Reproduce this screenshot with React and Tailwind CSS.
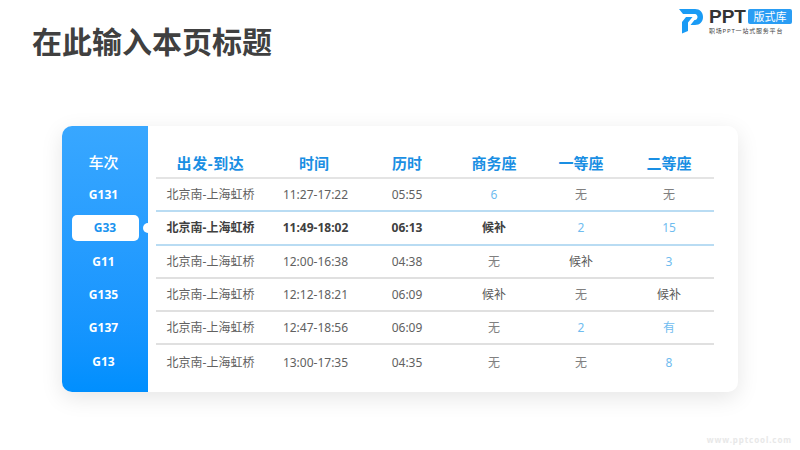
const font = { fontFamily: '"Noto Sans", "Noto Sans CJK SC", sans-serif' };

const rows = [
  { train: "G131", time: "11:27-17:22", span: "05:55", biz: "6", first: "无", second: "无" },
  { train: "G33", time: "11:49-18:02", span: "06:13", biz: "候补", first: "2", second: "15", active: true },
  { train: "G11", time: "12:00-16:38", span: "04:38", biz: "无", first: "候补", second: "3" },
  { train: "G135", time: "12:12-18:21", span: "06:09", biz: "候补", first: "无", second: "候补" },
  { train: "G137", time: "12:47-18:56", span: "06:09", biz: "无", first: "2", second: "有" },
  { train: "G13", time: "13:00-17:35", span: "04:35", biz: "无", first: "无", second: "8" },
];

// seats with tickets left are shown in light blue
function Seat({ value, bold }) {
  const blue = value !== "无" && value !== "候补";
  let color = "text-[#808080]";
  if (blue) color = "text-[#6fbcef] font-normal";
  else if (bold) color = "text-[#404040] font-bold";
  else if (value === "候补") color = "text-[#595959]";
  return <div className={`text-center ${color}`}>{value}</div>;
}

function Logo() {
  return (
    <div className="flex items-start">
      <svg width="25" height="25" viewBox="0 0 25 25" className="mt-[9px]">
        <path d="M0 0H16C21 0 24 3.5 24 8C24 12.5 21 16 16 16H11.5L15.5 11H16C17.5 11 18.5 9.5 18.5 8C18.5 6.5 17.5 5 16 5H4Z" fill="#1a9bf5" />
        <path d="M7 8H13.5L9 13.5V22L3 24.5V13Z" fill="#1a9bf5" />
      </svg>
      <div className="ml-[5px] mt-[9px] w-[84px]">
        <div className="flex items-center h-[15px]">
          <span className="font-['Liberation_Sans'] text-[19px] leading-[15px] font-bold text-[#333333]">PPT</span>
          <span className="ml-[2px] w-[44px] h-[15px] bg-[#2a9df4] rounded-[2px] text-white text-[11px] leading-[15px] text-center">版式库</span>
        </div>
        <div className="mt-[3px] text-[6px] leading-[8px] text-[#444444] whitespace-nowrap tracking-[0.8px]">职场PPT一站式服务平台</div>
      </div>
    </div>
  );
}

export default function App() {
  return (
    <div className="w-[800px] h-[450px] bg-white overflow-hidden flex flex-col" style={font}>
      {/* Header */}
      <div className="flex justify-between h-[126px] shrink-0 pl-[32px] pr-[7px]">
        <h1 className="mt-[22px] text-[30px] leading-[40px] font-bold text-[#404040]">在此输入本页标题</h1>
        <Logo />
      </div>

      {/* Card */}
      <div className="ml-[62px] w-[676px] h-[266px] shrink-0 flex bg-white rounded-[10px] shadow-[0_6px_22px_rgba(0,0,0,0.1)]">
        <div className="w-[86px] shrink-0 rounded-l-[10px] bg-gradient-to-b from-[#38a7ff] to-[#008ffe] text-white font-bold text-[12px]">
          <div className="h-[52.5px] pt-[17px] pr-[3px] text-center text-[15px] font-medium leading-[38px]">车次</div>
          {rows.map((r) => (
            <div key={r.train} className="relative h-[33.3px] flex items-center justify-center">
              {r.active ? (
                <>
                  <div className="ml-[1px] pr-[1px] w-[67px] h-[26px] bg-white rounded-[5px] text-[#1a93ef] text-center leading-[26px]">{r.train}</div>
                  <div className="absolute right-[-5px] top-[11px] w-[10px] h-[10px] rounded-full bg-white" />
                </>
              ) : (
                <span className="pr-[3px]">{r.train}</span>
              )}
            </div>
          ))}
        </div>

        <div className="ml-[8px] w-[558px] text-[12px]">
          <div className="h-[53px] pt-[17px] grid grid-cols-[109px_98px_88px_86px_88px_88px] border-b-2 border-[#e4e4e4] text-[15px] font-bold text-[#1a8fe3] text-center leading-[40px]">
            <div className="tracking-[0.6px]">出发-到达</div>
            <div>时间</div>
            <div>历时</div>
            <div>商务座</div>
            <div>一等座</div>
            <div>二等座</div>
          </div>
          {rows.map((r, i) => {
            const before = rows[i + 1]?.active;
            const line = r.active || before ? "border-[#b9dcf3]" : "border-[#e0e0e0]";
            return (
              <div
                key={r.train}
                className={`h-[33.3px] pt-[1px] grid grid-cols-[109px_98px_88px_86px_88px_88px] items-center ${i < rows.length - 1 ? `border-b-2 ${line}` : ""} ${r.active ? "font-bold text-[#404040]" : "text-[#616161]"}`}
              >
                <div className="text-center">北京南-上海虹桥</div>
                <div className="text-center pl-[3px]">{r.time}</div>
                <div className="text-center">{r.span}</div>
                <Seat value={r.biz} bold={r.active} />
                <Seat value={r.first} bold={r.active} />
                <Seat value={r.second} bold={r.active} />
              </div>
            );
          })}
        </div>
      </div>

      {/* Watermark */}
      <div className="mt-[42px] pr-[8px] text-right text-[8px] leading-[12px] text-[#e8e8e8] font-bold tracking-[0.9px]">www.pptcool.com</div>
    </div>
  );
}
